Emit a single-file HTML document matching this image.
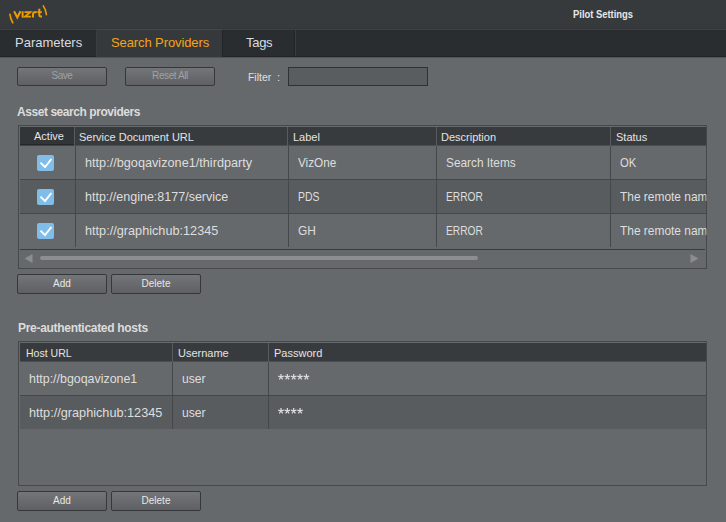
<!DOCTYPE html>
<html><head><meta charset="utf-8">
<style>
*{margin:0;padding:0;box-sizing:border-box;}
html,body{width:726px;height:522px;overflow:hidden;background:#66696b;font-family:"Liberation Sans",sans-serif;}
.a{position:absolute;}
.t{position:absolute;white-space:nowrap;line-height:1;}
#hdr{left:0;top:0;width:726px;height:29px;background:#373a3d;border-bottom:1px solid #333538;}
#tabs{left:0;top:29px;width:726px;height:28px;background:#2a2d30;}
.tab{position:absolute;top:0;height:28px;}
.btn{position:absolute;height:19px;width:90px;border:1px solid #35383a;border-radius:2px;background:linear-gradient(#737578,#5e6063);}
.btn span{position:absolute;left:0;right:0;text-align:center;font-size:10px;line-height:1;}
.tbl{position:absolute;left:18px;width:689px;border:1px solid #484b4d;background:#66696b;}
.hd{position:absolute;left:1px;right:1px;top:1px;height:19px;background:#36393c;border-top:1px solid #5a5d5f;}
.row{position:absolute;left:1px;right:1px;}
.ht{position:absolute;font-size:11px;color:#e4e4e4;line-height:1;white-space:nowrap;}
.ct{position:absolute;font-size:12.7px;color:#dedede;line-height:1;white-space:nowrap;}
.vs{position:absolute;width:1px;background:#56595b;}
.vd{position:absolute;width:1px;background:#4a4d4f;}
.hs{position:absolute;height:1px;background:#4a4d4f;}
.st{letter-spacing:1.9px;}
.cb{position:absolute;width:17px;height:16px;border-radius:2px;background:#80bde8;}
</style></head><body>
<div id="hdr" class="a">
  <svg class="a" style="left:0;top:0" width="60" height="29" viewBox="0 0 60 29">
    <g stroke="#eb9c00" fill="none" stroke-linecap="butt">
    <path d="M9.9 14.2 Q10.5 19.2 12.8 22.8" stroke-width="1.6" stroke-linecap="round"/>
    <path d="M43.3 5.9 Q45.9 9.8 46.4 14.6" stroke-width="1.6" stroke-linecap="round"/>
    <path d="M14.1 11.2 L17.3 17.5 L20.5 11.2" stroke-width="2"/>
    <path d="M22.6 11.2 V17.5" stroke-width="2"/>
    <path d="M24.5 12.1 H30.4 L24.9 16.6 H30.9" stroke-width="1.8"/>
    <path d="M33 17.5 V14 Q33 12 36.8 12" stroke-width="2"/>
    <path d="M39.3 8.8 V15.3 Q39.3 16.6 42 16.6" stroke-width="2"/>
    <path d="M37.4 12.1 H41.8" stroke-width="1.8"/>
    </g>
  </svg>
  <div class="t" style="left:573px;top:9px;font-size:11px;font-weight:bold;color:#e8e8e8;transform:scaleX(0.855);transform-origin:0 0;">Pilot Settings</div>
</div>
<div id="tabs" class="a">
  <div class="a" style="left:0;top:0;width:726px;height:1px;background:#3e4144;"></div>
  <div class="a" style="left:0;top:27px;width:726px;height:1px;background:#222527;"></div>
  <div class="a" style="left:96px;top:0;width:126px;height:28px;background:#36393c;border-top:1px solid #46494c;border-left:1px solid #3b3e41;"></div>
  <div class="a" style="left:222px;top:1px;width:1px;height:27px;background:#222527;"></div>
  <div class="a" style="left:294px;top:1px;width:1px;height:27px;background:#222527;"></div>
  <div class="a" style="left:295px;top:1px;width:1px;height:26px;background:#3a3d40;"></div>
  <div class="t" style="left:15px;top:7px;font-size:13px;color:#d8dce0;">Parameters</div>
  <div class="t" style="left:111px;top:7px;font-size:13px;color:#f5a31a;letter-spacing:-0.1px;">Search Providers</div>
  <div class="t" style="left:246px;top:7px;font-size:13px;color:#d8dce0;letter-spacing:-0.3px;">Tags</div>
</div>
</div>

<div class="a" style="left:0;top:57px;width:726px;height:1px;background:#515456;"></div>
<div class="btn" style="left:17px;top:67px;"><span style="top:3px;color:#a0a2a4;letter-spacing:-0.5px;">Save</span></div>
<div class="btn" style="left:125px;top:67px;"><span style="top:3px;color:#a0a2a4;letter-spacing:-0.4px;">Reset All</span></div>
<div class="t" style="left:248px;top:72px;font-size:11px;color:#e0e0e0;transform:scaleX(0.948);transform-origin:0 0;">Filter</div>
<div class="t" style="left:277px;top:72px;font-size:11px;color:#e0e0e0;">:</div>
<div class="a" style="left:288px;top:67px;width:140px;height:19px;border:1px solid #2f3234;background:#5a5d5f;"></div>

<div class="t" style="left:17px;top:106px;font-size:12px;font-weight:bold;color:#dcdcdc;letter-spacing:-0.44px;">Asset search providers</div>

<!-- table 1 -->
<div class="a" style="left:18px;top:125px;width:689px;height:144px;border:1px solid #46494b;"></div>
<div class="a" style="left:20px;top:127px;width:686px;height:18px;background:#383b3e;"></div><div class="a" style="left:20px;top:145px;width:686px;height:1px;background:#4b4e51;"></div>
<div class="a" style="left:20px;top:127px;width:54px;height:18px;background:#323538;border-bottom:1px solid #25282a;"></div><div class="a" style="left:20px;top:145px;width:54px;height:1px;background:#404346;"></div>
<div class="a" style="left:74px;top:127px;width:1px;height:19px;background:#595c5e;"></div>
<div class="a" style="left:287px;top:127px;width:1px;height:19px;background:#595c5e;"></div>
<div class="a" style="left:436px;top:127px;width:1px;height:19px;background:#595c5e;"></div>
<div class="a" style="left:610px;top:127px;width:1px;height:19px;background:#595c5e;"></div>
<div class="a" style="left:20px;top:146px;width:686px;height:33px;background:#66696b;"></div>
<div class="a" style="left:20px;top:179px;width:686px;height:1px;background:#45484a;"></div>
<div class="a" style="left:75px;top:146px;width:1px;height:33px;background:#45484a;"></div>
<div class="a" style="left:288px;top:146px;width:1px;height:33px;background:#45484a;"></div>
<div class="a" style="left:436px;top:146px;width:1px;height:33px;background:#45484a;"></div>
<div class="a" style="left:610px;top:146px;width:1px;height:33px;background:#45484a;"></div>
<div class="cb" style="left:37px;top:155px;"><svg width="17" height="16" viewBox="0 0 17 16"><path d="M3.4 7.6 L8 12 L14.4 4" stroke="#fff" stroke-width="1.9" fill="none"/></svg></div>
<div class="ct" style="left:85px;top:157px;">http://bgoqavizone1/thirdparty</div>
<div class="ct" style="left:298px;top:157px;transform:scaleX(0.924);transform-origin:0 0;">VizOne</div>
<div class="ct" style="left:446px;top:157px;transform:scaleX(0.932);transform-origin:0 0;">Search Items</div>
<div class="ct" style="left:620px;top:157px;transform:scaleX(0.889);transform-origin:0 0;">OK</div>
<div class="a" style="left:20px;top:180px;width:686px;height:33px;background:#595c5e;"></div>
<div class="a" style="left:20px;top:213px;width:686px;height:1px;background:#45484a;"></div>
<div class="a" style="left:75px;top:180px;width:1px;height:33px;background:#45484a;"></div>
<div class="a" style="left:288px;top:180px;width:1px;height:33px;background:#45484a;"></div>
<div class="a" style="left:436px;top:180px;width:1px;height:33px;background:#45484a;"></div>
<div class="a" style="left:610px;top:180px;width:1px;height:33px;background:#45484a;"></div>
<div class="cb" style="left:37px;top:189px;"><svg width="17" height="16" viewBox="0 0 17 16"><path d="M3.4 7.6 L8 12 L14.4 4" stroke="#fff" stroke-width="1.9" fill="none"/></svg></div>
<div class="ct" style="left:85px;top:191px;transform:scaleX(0.986);transform-origin:0 0;">http://engine:8177/service</div>
<div class="ct" style="left:298px;top:191px;transform:scaleX(0.82);transform-origin:0 0;">PDS</div>
<div class="ct" style="left:446px;top:191px;transform:scaleX(0.805);transform-origin:0 0;">ERROR</div>
<div class="ct" style="left:620px;top:191px;width:92px;overflow:hidden;transform:scaleX(0.94);transform-origin:0 0;">The remote name could not be resolved</div>
<div class="a" style="left:20px;top:214px;width:686px;height:33px;background:#66696b;"></div>
<div class="a" style="left:75px;top:214px;width:1px;height:33px;background:#45484a;"></div>
<div class="a" style="left:288px;top:214px;width:1px;height:33px;background:#45484a;"></div>
<div class="a" style="left:436px;top:214px;width:1px;height:33px;background:#45484a;"></div>
<div class="a" style="left:610px;top:214px;width:1px;height:33px;background:#45484a;"></div>
<div class="cb" style="left:37px;top:223px;"><svg width="17" height="16" viewBox="0 0 17 16"><path d="M3.4 7.6 L8 12 L14.4 4" stroke="#fff" stroke-width="1.9" fill="none"/></svg></div>
<div class="ct" style="left:85px;top:225px;">http://graphichub:12345</div>
<div class="ct" style="left:298px;top:225px;transform:scaleX(0.939);transform-origin:0 0;">GH</div>
<div class="ct" style="left:446px;top:225px;transform:scaleX(0.805);transform-origin:0 0;">ERROR</div>
<div class="ct" style="left:620px;top:225px;width:92px;overflow:hidden;transform:scaleX(0.94);transform-origin:0 0;">The remote name could not be resolved</div>
<div class="ht" style="left:34px;top:131px;">Active</div>
<div class="ht" style="left:79px;top:132px;">Service Document URL</div>
<div class="ht" style="left:293px;top:132px;">Label</div>
<div class="ht" style="left:441px;top:132px;">Description</div>
<div class="ht" style="left:616px;top:132px;">Status</div>
<div class="a" style="left:20px;top:249px;width:685px;height:1px;background:#393c3e;"></div>
<svg class="a" style="left:24px;top:254px" width="9" height="9" viewBox="0 0 9 9"><path d="M0.5 4.5 L8.5 0 L8.5 9 Z" fill="#8b8d8f"/></svg>
<svg class="a" style="left:690px;top:254px" width="9" height="9" viewBox="0 0 9 9"><path d="M8.5 4.5 L0.5 0 L0.5 9 Z" fill="#8b8d8f"/></svg>
<div class="a" style="left:40px;top:256px;width:438px;height:4px;border-radius:2px;background:#8c8e90;"></div>

<div class="btn" style="left:17px;top:274px;width:90px;height:20px;"><span style="top:4px;color:#e8e8e8;">Add</span></div>
<div class="btn" style="left:111px;top:274px;width:90px;height:20px;"><span style="top:4px;color:#e8e8e8;">Delete</span></div>

<div class="t" style="left:18px;top:322px;font-size:12px;font-weight:bold;color:#dcdcdc;letter-spacing:-0.3px;">Pre-authenticated hosts</div>

<!-- table 2 -->
<div class="a" style="left:18px;top:341px;width:689px;height:145px;border:1px solid #46494b;"></div>
<div class="a" style="left:20px;top:343px;width:686px;height:18px;background:#383b3e;"></div><div class="a" style="left:20px;top:361px;width:686px;height:1px;background:#4b4e51;"></div>
<div class="a" style="left:172px;top:343px;width:1px;height:19px;background:#595c5e;"></div>
<div class="a" style="left:268px;top:343px;width:1px;height:19px;background:#595c5e;"></div>
<div class="a" style="left:20px;top:362px;width:686px;height:33px;background:#66696b;"></div>
<div class="a" style="left:20px;top:395px;width:686px;height:1px;background:#45484a;"></div>
<div class="a" style="left:172px;top:362px;width:1px;height:33px;background:#45484a;"></div>
<div class="a" style="left:268px;top:362px;width:1px;height:33px;background:#45484a;"></div>
<div class="ct" style="left:29px;top:373px;transform:scaleX(0.977);transform-origin:0 0;">http://bgoqavizone1</div>
<div class="ct" style="left:182px;top:373px;transform:scaleX(0.956);transform-origin:0 0;">user</div>
<svg class="a" style="left:277px;top:373px" width="40" height="8" viewBox="0 0 40 8"><path d="M4.00 4.00 L4.00 1.10 M4.00 4.00 L6.76 3.10 M4.00 4.00 L5.70 6.35 M4.00 4.00 L2.30 6.35 M4.00 4.00 L1.24 3.10 M10.35 4.00 L10.35 1.10 M10.35 4.00 L13.11 3.10 M10.35 4.00 L12.05 6.35 M10.35 4.00 L8.65 6.35 M10.35 4.00 L7.59 3.10 M16.70 4.00 L16.70 1.10 M16.70 4.00 L19.46 3.10 M16.70 4.00 L18.40 6.35 M16.70 4.00 L15.00 6.35 M16.70 4.00 L13.94 3.10 M23.05 4.00 L23.05 1.10 M23.05 4.00 L25.81 3.10 M23.05 4.00 L24.75 6.35 M23.05 4.00 L21.35 6.35 M23.05 4.00 L20.29 3.10 M29.40 4.00 L29.40 1.10 M29.40 4.00 L32.16 3.10 M29.40 4.00 L31.10 6.35 M29.40 4.00 L27.70 6.35 M29.40 4.00 L26.64 3.10" stroke="#dcdcdc" stroke-width="1.25" fill="none" stroke-linecap="butt"/></svg>
<div class="a" style="left:20px;top:396px;width:686px;height:33px;background:#595c5e;"></div>
<div class="a" style="left:172px;top:396px;width:1px;height:33px;background:#45484a;"></div>
<div class="a" style="left:268px;top:396px;width:1px;height:33px;background:#45484a;"></div>
<div class="ct" style="left:29px;top:407px;">http://graphichub:12345</div>
<div class="ct" style="left:182px;top:407px;transform:scaleX(0.956);transform-origin:0 0;">user</div>
<svg class="a" style="left:277px;top:407px" width="40" height="8" viewBox="0 0 40 8"><path d="M4.00 4.00 L4.00 1.10 M4.00 4.00 L6.76 3.10 M4.00 4.00 L5.70 6.35 M4.00 4.00 L2.30 6.35 M4.00 4.00 L1.24 3.10 M10.35 4.00 L10.35 1.10 M10.35 4.00 L13.11 3.10 M10.35 4.00 L12.05 6.35 M10.35 4.00 L8.65 6.35 M10.35 4.00 L7.59 3.10 M16.70 4.00 L16.70 1.10 M16.70 4.00 L19.46 3.10 M16.70 4.00 L18.40 6.35 M16.70 4.00 L15.00 6.35 M16.70 4.00 L13.94 3.10 M23.05 4.00 L23.05 1.10 M23.05 4.00 L25.81 3.10 M23.05 4.00 L24.75 6.35 M23.05 4.00 L21.35 6.35 M23.05 4.00 L20.29 3.10" stroke="#dcdcdc" stroke-width="1.25" fill="none" stroke-linecap="butt"/></svg>
<div class="ht" style="left:26px;top:348px;transform:scaleX(0.956);transform-origin:0 0;">Host URL</div>
<div class="ht" style="left:178px;top:348px;">Username</div>
<div class="ht" style="left:274px;top:348px;">Password</div>

<div class="btn" style="left:17px;top:491px;width:90px;height:20px;"><span style="top:4px;color:#e8e8e8;">Add</span></div>
<div class="btn" style="left:111px;top:491px;width:90px;height:20px;"><span style="top:4px;color:#e8e8e8;">Delete</span></div>
</body></html>
